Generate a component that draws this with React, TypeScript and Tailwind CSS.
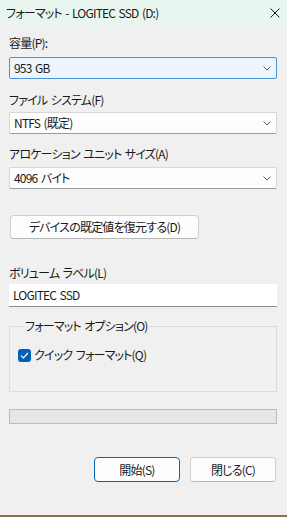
import React from "react";

const font = "font-['Noto_Sans_CJK_JP','Noto_Sans',sans-serif] [font-feature-settings:'palt'] tracking-[-0.8px] [word-spacing:1.5px]";

function Chevron() {
  return (
    <svg width="8" height="5" viewBox="0 0 8 5" className="shrink-0">
      <path d="M0.5 0.5 L4 4 L7.5 0.5" fill="none" stroke="#606060" strokeWidth="1" />
    </svg>
  );
}

function Select({ value, focused }: { value: string; focused?: boolean }) {
  return (
    <div
      className={`h-[22px] flex items-center justify-between pl-[4px] pr-[5px] rounded-[2px] border ${
        focused ? "bg-[#eef4fb] border-[#4a94d8]" : "bg-[#fdfdfd] border-[#d6d6d6] border-b-[#9a9a9a]"
      }`}
    >
      <span>{value}</span>
      <Chevron />
    </div>
  );
}

function Label({ text, className }: { text: string; className?: string }) {
  return <div className={`leading-[16px] ${className ?? ""}`}>{text}</div>;
}

export default function App() {
  return (
    <div className={`w-[287px] h-[517px] bg-[#f0f0f0] flex flex-col text-[12px] text-[#1a1a1a] ${font}`}>
      {/* タイトルバー */}
      <div className="h-[25px] shrink-0 bg-[#e9f5ef] flex items-center justify-between pl-[6px] pr-[7px]">
        <span className="leading-[16px]">フォーマット - LOGITEC SSD (D:)</span>
        <svg width="10" height="10" viewBox="0 0 10 10">
          <path d="M0.5 0.5 L9.5 9.5 M9.5 0.5 L0.5 9.5" stroke="#1f1f1f" strokeWidth="1" />
        </svg>
      </div>

      <div className="flex-1 flex flex-col pl-[9px] pr-[10px]">
        <Label text="容量(P):" className="mt-[10px]" />
        <div className="mt-[6px]">
          <Select value="953 GB" focused />
        </div>

        <Label text="ファイル システム(F)" className="mt-[13px]" />
        <div className="mt-[4px]">
          <Select value="NTFS (既定)" />
        </div>

        <Label text="アロケーション ユニット サイズ(A)" className="mt-[12px]" />
        <div className="mt-[5px]">
          <Select value="4096 バイト" />
        </div>

        <button className="mt-[26px] ml-[1px] w-[189px] h-[24px] bg-[#fdfdfd] border border-[#d0d0d0] border-b-[#b8b8b8] rounded-[4px] leading-[16px]">
          デバイスの既定値を復元する(D)
        </button>

        <Label text="ボリューム ラベル(L)" className="mt-[26px]" />
        <div className="mt-[3px] h-[23px] flex items-center pl-[4px] bg-white border-b border-[#8a8a8a]">
          LOGITEC SSD
        </div>

        <fieldset className="mt-[11px] h-[74px] border border-[#dcdcdc] px-[8px]">
          <legend className="ml-[6px] px-[1px] leading-[16px]">フォーマット オプション(O)</legend>
          <div className="mt-[13px] flex items-center gap-[3px]">
            <span className="w-[13px] h-[13px] rounded-[3px] bg-[#005fb8] flex items-center justify-center">
              <svg width="9" height="7" viewBox="0 0 9 7">
                <path d="M1 3.6 L3.4 6 L8 1" fill="none" stroke="#ffffff" strokeWidth="1.2" />
              </svg>
            </span>
            <span className="leading-[16px]">クイック フォーマット(Q)</span>
          </div>
        </fieldset>

        <div className="mt-[17px] h-[15px] bg-[#e6e6e6] border border-[#bcbcbc]" />

        <div className="mt-[33px] flex justify-end gap-[10px] pr-[1px]">
          <button className="w-[86px] h-[25px] bg-[#fdfdfd] border border-[#0067c0] rounded-[4px] leading-[16px]">
            開始(S)
          </button>
          <button className="w-[86px] h-[25px] bg-[#fdfdfd] border border-[#d0d0d0] border-b-[#b8b8b8] rounded-[4px] leading-[16px]">
            閉じる(C)
          </button>
        </div>
      </div>

      <div className="h-[2px] shrink-0 bg-[#8a6d4a]" />
    </div>
  );
}
